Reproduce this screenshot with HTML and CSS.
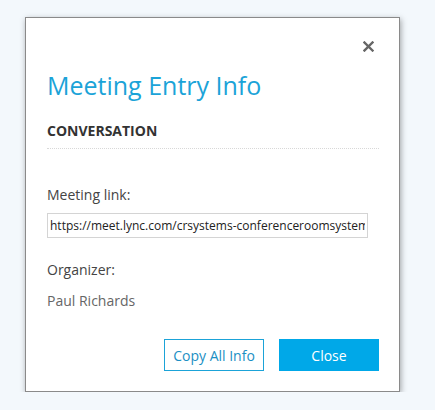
FILE: index.html
```html
<!DOCTYPE html>
<html lang="en">
<head>
	<meta charset="UTF-8">
	<title>Meeting Entry Info</title>
<link rel="stylesheet" href="styles.css">
</head>
<body>
<div class="dialog">
	<div class="top">
		<svg class="close-x" width="11" height="11" viewBox="0 0 11 11">
			<path d="M1.5 1.5 L9.5 9.5 M9.5 1.5 L1.5 9.5" stroke="#666" stroke-width="2.4" stroke-linecap="square"/>
		</svg>
	</div>
	<h1 class="title">Meeting Entry Info</h1>
	<h2 class="section">CONVERSATION</h2>
	<div class="field">
		<label class="label">Meeting link:</label>
		<input class="link" type="text" value="https://meet.lync.com/crsystems-conferenceroomsystems/paul/ABC123" readonly>
	</div>
	<div class="field">
		<div class="label">Organizer:</div>
		<div class="value">Paul Richards</div>
	</div>
	<div class="buttons">
		<button class="btn btn-copy">Copy All Info</button>
		<button class="btn btn-close">Close</button>
	</div>
</div>
</body>
</html>
```

FILE: styles.css
```css
html,body{
	margin:0;
	padding:0;
}
body{
	background:#f3f8fc;
	font-family:"Open Sans","Noto Sans",sans-serif;
	color:#333;
}
.dialog{
	box-sizing:border-box;
	width:375px;
	height:375px;
	margin:17px 0 0 25px;
	padding:0 20px 0 21px;
	background:#fff;
	border:1px solid #8a8a8a;
	box-shadow:1px 2px 6px rgba(0,0,0,0.35);
}
.top{
	display:flex;
	justify-content:flex-end;
	height:26px;
	padding-top:23px;
}
.close-x{
	display:block;
	margin-right:5px;
}
.title{
	margin:0;
	font-size:25px;
	font-weight:normal;
	color:#1ba3d8;
	line-height:36px;
}
.section{
	margin:19px 0 0 0;
	padding-bottom:8px;
	font-size:14px;
	font-weight:bold;
	color:#333;
	line-height:18px;
	border-bottom:1px dotted #d8d8d8;
}
.field{
	margin-top:36px;
}
.field + .field{
	margin-top:22px;
}
.label{
	display:block;
	font-size:14px;
	color:#444;
	line-height:20px;
}
.link{
	box-sizing:border-box;
	display:block;
	width:321px;
	height:25px;
	margin-top:8px;
	padding:0 2px;
	border:1px solid #d4d4d4;
	font-family:"Open Sans","Noto Sans",sans-serif;
	font-size:12px;
	color:#222;
	outline:none;
}
.value{
	margin-top:11px;
	font-size:14px;
	color:#666;
	line-height:20px;
}
.buttons{
	display:flex;
	justify-content:flex-end;
	gap:15px;
	margin-top:28px;
}
.btn{
	box-sizing:border-box;
	width:100px;
	height:32px;
	font-family:"Open Sans","Noto Sans",sans-serif;
	font-size:14px;
	padding:0;
	cursor:pointer;
}
.btn-copy{
	background:#fff;
	border:1px solid #1ba3d8;
	color:#1b8fc4;
}
.btn-close{
	background:#00a8e8;
	border:1px solid #00a8e8;
	color:#fff;
}
```
